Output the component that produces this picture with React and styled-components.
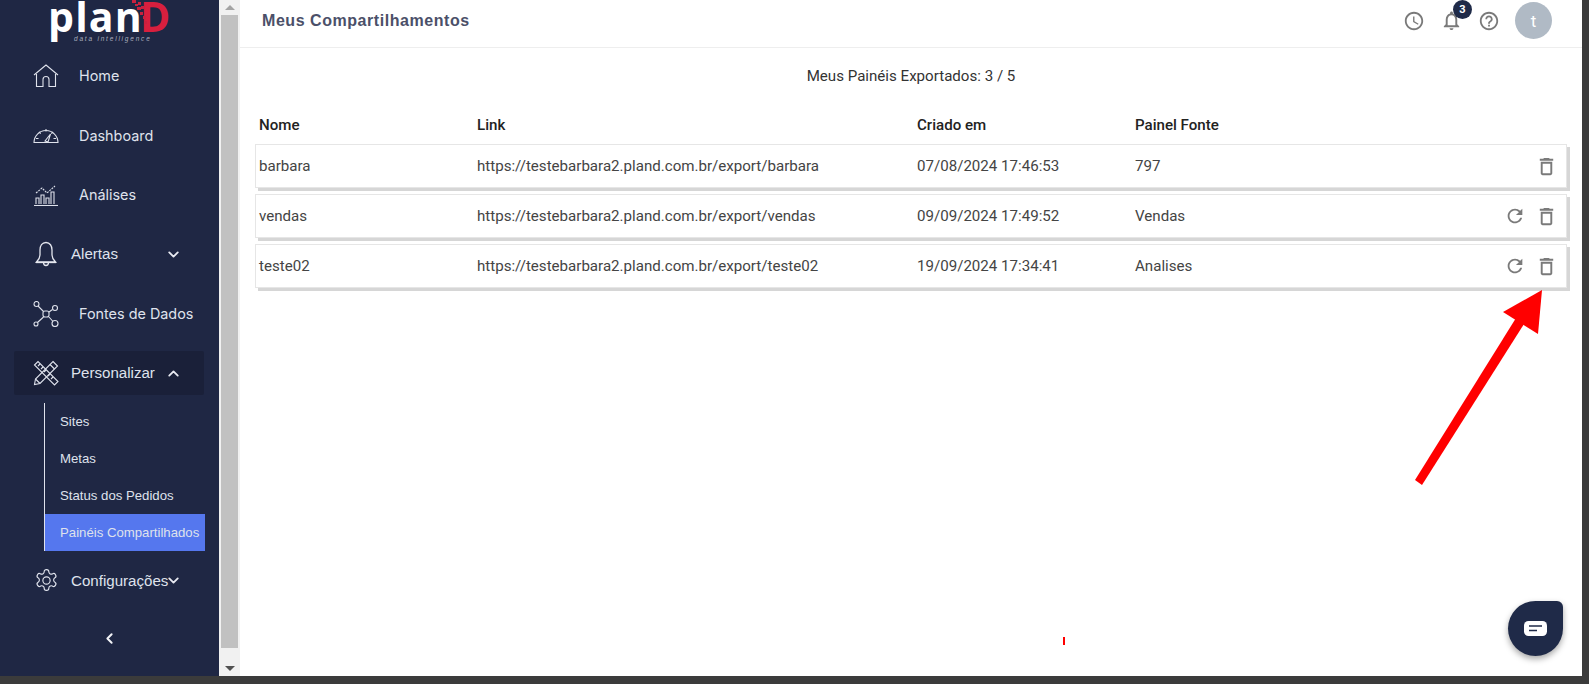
import React from "react";
import styled, { createGlobalStyle } from "styled-components";
import { ChevronDown, ChevronUp, ChevronLeft } from "lucide-react";
import {
  MdAccessTime,
  MdNotificationsNone,
  MdHelpOutline,
  MdRefresh,
  MdOutlineDelete,
} from "react-icons/md";

const rows = [
  {
    name: "barbara",
    link: "https://testebarbara2.pland.com.br/export/barbara",
    date: "07/08/2024 17:46:53",
    source: "797",
    canRefresh: false,
  },
  {
    name: "vendas",
    link: "https://testebarbara2.pland.com.br/export/vendas",
    date: "09/09/2024 17:49:52",
    source: "Vendas",
    canRefresh: true,
  },
  {
    name: "teste02",
    link: "https://testebarbara2.pland.com.br/export/teste02",
    date: "19/09/2024 17:34:41",
    source: "Analises",
    canRefresh: true,
  },
];

const HomeIcon = () => (
  <svg width="26" height="24" viewBox="0 0 26 24" fill="none" stroke="#dfe2ec" strokeWidth="1.100">
    <path d="M1 11 13 1l12 10" />
    <path d="M3.500 10v12.500h6.500v-7a3 3 0 0 1 6 0v7h6.500V10" />
  </svg>
);

const GaugeIcon = () => (
  <svg width="26" height="18" viewBox="0 0 26 18" fill="none" stroke="#dfe2ec" strokeWidth="1.100">
    <path d="M1 16.500a12 12 0 0 1 24 0z" />
    <path d="M13 3v2.500M6 6l1.700 1.700M20 6l-1.700 1.700M3 12.500h2.500M20.500 12.500H23" />
    <path d="M12 15l5.500-7-2.500 8z" />
  </svg>
);

const ChartIcon = () => (
  <svg width="26" height="22" viewBox="0 0 26 22" fill="none" stroke="#dfe2ec" strokeWidth="1.100">
    <path d="M1 21.500h24" />
    <path d="M3 20v-6h3v6M8 20V11h3v9M13 20v-6h3v6M18 20V8h3v12" />
    <path d="M3 9l6-5 5 5 8-7" strokeDasharray="2 1" />
  </svg>
);

const BellIcon = () => (
  <svg width="22" height="27" viewBox="0 0 22 27" fill="none" stroke="#e4e6ee" strokeWidth="1.300">
    <path d="M11 1.500c-4 0-6 3.500-6 7.500v5c0 3-1.500 5-3.500 7h19c-2-2-3.500-4-3.500-7V9c0-4-2-7.500-6-7.500z" />
    <path d="M8.500 21.500c0 4 5 4 5 0" />
    <path d="M1 21.500h20" />
  </svg>
);

const NetworkIcon = () => (
  <svg width="26" height="26" viewBox="0 0 26 26" fill="none" stroke="#dfe2ec" strokeWidth="1.100">
    <rect x="10" y="10" width="6" height="6" rx="2" />
    <circle cx="3.500" cy="3" r="2.500" />
    <circle cx="22" cy="7" r="2.500" />
    <circle cx="3" cy="23" r="2" />
    <circle cx="22" cy="22.500" r="3" />
    <path d="M5 5l5.500 5.500M19.500 8.500 16 11M4.500 21.500l6-5.500M16 16l4 4.500" />
  </svg>
);

const ToolsIcon = () => (
  <svg width="26" height="26" viewBox="0 0 26 26" fill="none" stroke="#dfe2ec" strokeWidth="1.100">
    <path d="M1.500 5 5 1.500l20 20-3.500 3.500z" />
    <path d="M5 6l2-2M8 9l2-2M11 12l2-2M15 16l2-2M18 19l2-2" />
    <path d="M20 1.500l4.500 4.500L7 23.500l-5.500 1 1-5.500z" />
    <path d="M17 4.500l4.500 4.500M2.500 19l4.500 4.500" />
  </svg>
);

const GearIcon = () => (
  <svg width="25" height="25" viewBox="0 0 24 24" fill="none" stroke="#dfe2ec" strokeWidth="1.100">
    <circle cx="12" cy="12" r="3.500" />
    <path d="M12.220 1.500h-.44a2 2 0 0 0-2 2v.180a2 2 0 0 1-1 1.730l-.430.250a2 2 0 0 1-2 0l-.150-.080a2 2 0 0 0-2.730.730l-.220.380a2 2 0 0 0 .730 2.730l.150.100a2 2 0 0 1 1 1.720v.510a2 2 0 0 1-1 1.740l-.150.090a2 2 0 0 0-.730 2.730l.220.380a2 2 0 0 0 2.730.730l.150-.080a2 2 0 0 1 2 0l.430.250a2 2 0 0 1 1 1.730v.180a2 2 0 0 0 2 2h.44a2 2 0 0 0 2-2v-.180a2 2 0 0 1 1-1.730l.430-.250a2 2 0 0 1 2 0l.150.080a2 2 0 0 0 2.730-.730l.220-.390a2 2 0 0 0-.730-2.730l-.150-.080a2 2 0 0 1-1-1.740v-.500a2 2 0 0 1 1-1.740l.150-.090a2 2 0 0 0 .730-2.730l-.220-.380a2 2 0 0 0-2.730-.730l-.150.080a2 2 0 0 1-2 0l-.430-.250a2 2 0 0 1-1-1.730V3.500a2 2 0 0 0-2-2z" />
  </svg>
);

const App = () => {
  return (
    <Frame>
      <GlobalStyle />
      <Window>
        <Sidebar>
          <LogoBox>
            <LogoText>
              plan<LogoD>D</LogoD>
            </LogoText>
            <LogoBits width="24" height="26" viewBox="0 0 24 26" fill="#c9213f">
              <rect x="2" y="0" width="4" height="3" />
              <rect x="5" y="4" width="3" height="2" />
              <rect x="8" y="2" width="3" height="3" />
              <rect x="7" y="7" width="4" height="3" />
              <rect x="11" y="6" width="3" height="3" />
              <rect x="10" y="12" width="3" height="3" />
              <rect x="13" y="16" width="3" height="3" />
              <rect x="15" y="21" width="2" height="3" />
            </LogoBits>
            <LogoTag>data intelligence</LogoTag>
          </LogoBox>

          <NavItem>
            <NavIcon><HomeIcon /></NavIcon>
            <NavLabel>Home</NavLabel>
          </NavItem>
          <NavItem>
            <NavIcon><GaugeIcon /></NavIcon>
            <NavLabel>Dashboard</NavLabel>
          </NavItem>
          <NavItem>
            <NavIcon><ChartIcon /></NavIcon>
            <NavLabel>Análises</NavLabel>
          </NavItem>
          <NavItem>
            <NavIcon><BellIcon /></NavIcon>
            <GroupLabel>Alertas</GroupLabel>
            <Caret $gap={47}><ChevronDown size={17} strokeWidth={2.6} /></Caret>
          </NavItem>
          <NavItem>
            <NavIcon><NetworkIcon /></NavIcon>
            <NavLabel>Fontes de Dados</NavLabel>
          </NavItem>
          <NavItem>
            <OpenGroup>
              <NavIcon $open><ToolsIcon /></NavIcon>
              <GroupLabel>Personalizar</GroupLabel>
              <Caret $gap={10}><ChevronUp size={17} strokeWidth={2.6} /></Caret>
            </OpenGroup>
          </NavItem>
          <SubMenu>
            <SubItem>Sites</SubItem>
            <SubItem>Metas</SubItem>
            <SubItem>Status dos Pedidos</SubItem>
            <SubItem $active>Painéis Compartilhados</SubItem>
          </SubMenu>
          <NavItem>
            <NavIcon><GearIcon /></NavIcon>
            <GroupLabel>Configurações</GroupLabel>
            <Caret $gap={-3}><ChevronDown size={17} strokeWidth={2.6} /></Caret>
          </NavItem>
          <Collapse>
            <ChevronLeft size={17} strokeWidth={2.8} />
          </Collapse>
        </Sidebar>

        <ScrollBar>
          <ScrollArrow $up />
          <ScrollThumb />
          <ScrollArrow />
        </ScrollBar>

        <Main>
          <TopBar>
            <Title>Meus Compartilhamentos</Title>
            <TopActions>
              <TopIcon $spaced><MdAccessTime size={22} /></TopIcon>
              <TopIcon>
                <MdNotificationsNone size={23} />
                <Badge>3</Badge>
              </TopIcon>
              <TopIcon><MdHelpOutline size={22} /></TopIcon>
              <Avatar>t</Avatar>
            </TopActions>
          </TopBar>

          <Summary>Meus Painéis Exportados: 3 / 5</Summary>

          <TableHead>
            <span>Nome</span>
            <span>Link</span>
            <span>Criado em</span>
            <span>Painel Fonte</span>
          </TableHead>

          <RowList>
            {rows.map((row) => (
              <Row key={row.name}>
                <span>{row.name}</span>
                <span>{row.link}</span>
                <span>{row.date}</span>
                <span>{row.source}</span>
                <RowActions>
                  {row.canRefresh && <MdRefresh size={22} />}
                  <MdOutlineDelete size={23} />
                </RowActions>
              </Row>
            ))}
          </RowList>

          <RedTick />
          <Arrow width="130" height="200" viewBox="0 0 130 200" fill="#ff0000">
            <path d="M128 0 124 44 89 22z" />
            <path d="M102 28 110 34 8 195 1 190z" />
          </Arrow>
          <ChatButton>
            <svg width="23" height="15" viewBox="0 0 23 15">
              <rect width="23" height="15" rx="4.500" fill="#fff" />
              <path d="M5 5h13M5 9.500h8" stroke="#1f2a48" strokeWidth="1.600" />
            </svg>
          </ChatButton>
        </Main>
      </Window>
      <BottomBand />
    </Frame>
  );
};

const GlobalStyle = createGlobalStyle`
  html, body {
    margin: 0;
    height: 100%;
    overflow: hidden;
    background: #3b3b3b;
  }
`;

const Frame = styled.div`
  width: 1589px;
  height: 684px;
  display: flex;
  flex-direction: column;
  background: #3b3b3b;
`;

const Window = styled.div`
  display: flex;
  height: 676px;
  width: 1582px;
  flex-shrink: 0;
`;

const BottomBand = styled.div`
  flex: 1;
  background: #3b3b3b;
`;

const Sidebar = styled.nav`
  width: 219px;
  flex-shrink: 0;
  background: #1f2744;
  display: flex;
  flex-direction: column;
  color: #dfe2ec;
`;

const LogoBox = styled.div`
  position: relative;
  height: 46px;
  flex-shrink: 0;
  overflow: hidden;
`;

const LogoText = styled.div`
  position: absolute;
  left: 48px;
  top: 0;
  font-family: "Open Sans", sans-serif;
  font-size: 41px;
  font-weight: 700;
  line-height: 32px;
  letter-spacing: 1.2px;
  color: #fff;
`;

const LogoD = styled.span`
  font-size: 41px;
  letter-spacing: 0;
  margin-left: -3px;
  color: #d81f3e;
`;

const LogoBits = styled.svg`
  position: absolute;
  left: 130px;
  top: 0;
`;

const LogoTag = styled.div`
  position: absolute;
  left: 74px;
  top: 35px;
  font-family: "Liberation Sans", sans-serif;
  font-size: 6.5px;
  font-style: italic;
  letter-spacing: 1.8px;
  line-height: 8px;
  color: #a9adbd;
  white-space: nowrap;
`;

const NavItem = styled.div`
  height: 59.5px;
  flex-shrink: 0;
  display: flex;
  align-items: center;
`;

const NavIcon = styled.span`
  width: 26px;
  height: 28px;
  margin-left: ${({ $open }) => ($open ? "19px" : "33px")};
  display: flex;
  align-items: center;
  justify-content: center;
  flex-shrink: 0;
`;

const NavLabel = styled.span`
  margin-left: 20px;
  font-family: Inter, sans-serif;
  font-size: 14.4px;
  color: #dfe2ec;
`;

const GroupLabel = styled.span`
  margin-left: 12px;
  padding-bottom: 1px;
  font-family: "Liberation Sans", sans-serif;
  font-size: 15.1px;
  color: #dfe2ec;
`;

const Caret = styled.span`
  margin-left: ${({ $gap }) => $gap}px;
  display: flex;
  color: #e8eaf2;
`;

const OpenGroup = styled.div`
  margin-left: 14px;
  width: 190px;
  height: 44px;
  border-radius: 2px;
  background: #1a2039;
  display: flex;
  align-items: center;
`;

const SubMenu = styled.div`
  margin-left: 44px;
  width: 160px;
  border-left: 1px solid #dfe2ec;
  display: flex;
  flex-direction: column;
`;

const SubItem = styled.div`
  height: 37px;
  padding-left: 15px;
  display: flex;
  align-items: center;
  font-family: "Liberation Sans", sans-serif;
  font-size: 13.2px;
  white-space: nowrap;
  color: #dfe2ec;
  background: ${({ $active }) => ($active ? "#5577ee" : "transparent")};
`;

const Collapse = styled.div`
  margin-top: 19px;
  display: flex;
  justify-content: center;
  color: #f2f3f7;
  padding-right: 1px;
`;

const ScrollBar = styled.div`
  width: 21px;
  flex-shrink: 0;
  background: #f1f1f1;
  display: flex;
  flex-direction: column;
  align-items: center;
`;

const ScrollArrow = styled.div`
  height: 15px;
  flex-shrink: 0;
  display: flex;
  align-items: center;
  justify-content: center;

  &::before {
    content: "";
    border-left: 5px solid transparent;
    border-right: 5px solid transparent;
    border-bottom: ${({ $up }) => ($up ? "5px solid #a3a3a3" : "none")};
    border-top: ${({ $up }) => ($up ? "none" : "5px solid #505050")};
  }
`;

const ScrollThumb = styled.div`
  flex: 1;
  width: 17px;
  background: #c1c1c1;
  margin-bottom: 13px;
`;

const Main = styled.main`
  position: relative;
  flex: 1;
  min-width: 0;
  background: #fff;
  font-family: Roboto, sans-serif;
`;

const TopBar = styled.header`
  box-sizing: content-box;
  height: 41px;
  border-bottom: 1px solid #eeeeee;
  display: flex;
  align-items: center;
  justify-content: space-between;
  padding: 0 30px 6px 22px;
`;

const Title = styled.h1`
  margin: 0;
  font-family: "Liberation Sans", sans-serif;
  font-size: 16px;
  font-weight: 700;
  letter-spacing: 0.55px;
  color: #4b5069;
`;

const TopActions = styled.div`
  display: flex;
  align-items: center;
  color: #7a7a7a;
`;

const TopIcon = styled.span`
  position: relative;
  width: 37px;
  margin-right: ${({ $spaced }) => ($spaced ? "1px" : "0")};
  display: flex;
  justify-content: center;
`;

const Badge = styled.span`
  position: absolute;
  top: -9px;
  left: 20px;
  width: 19px;
  height: 19px;
  border-radius: 50%;
  background: #1f2a48;
  color: #fff;
  font-size: 11px;
  font-weight: 700;
  display: flex;
  align-items: center;
  justify-content: center;
`;

const Avatar = styled.span`
  width: 37px;
  height: 37px;
  margin-left: 8px;
  border-radius: 50%;
  background: #b0bac5;
  color: #fff;
  font-size: 17px;
  display: flex;
  align-items: center;
  justify-content: center;
`;

const Summary = styled.p`
  margin: 0;
  padding-top: 19px;
  height: 58px;
  box-sizing: border-box;
  text-align: center;
  font-size: 15.1px;
  line-height: 18px;
  color: #333;
`;

const columns = "218px 440px 218px 218px 1fr";

const TableHead = styled.div`
  display: grid;
  grid-template-columns: ${columns};
  padding: 0 15px 0 19px;
  height: 38px;
  align-items: center;
  font-size: 15.1px;
  font-weight: 500;
  color: #222;
`;

const RowList = styled.div`
  display: flex;
  flex-direction: column;
  gap: 6px;
  padding: 0 15px;
`;

const Row = styled.div`
  display: grid;
  grid-template-columns: ${columns};
  align-items: center;
  height: 44px;
  box-sizing: border-box;
  padding-left: 3px;
  border: 1px solid #e6e6e6;
  box-shadow: 3px 3px 0 #d6d6d6;
  font-size: 15.1px;
  color: #444;
`;

const RowActions = styled.div`
  display: flex;
  justify-content: flex-end;
  align-items: center;
  gap: 9px;
  padding-right: 8px;
  color: #7a7a7a;
`;

const RedTick = styled.div`
  position: absolute;
  left: 823px;
  top: 637px;
  width: 2px;
  height: 8px;
  background: #ff0000;
`;

const Arrow = styled.svg`
  position: absolute;
  left: 1174px;
  top: 290px;
`;

const ChatButton = styled.div`
  position: absolute;
  left: 1268px;
  top: 601px;
  width: 55px;
  height: 55px;
  border-radius: 50% 6px 50% 50%;
  background: #1f2a48;
  box-shadow: 0 3px 6px rgba(0, 0, 0, 0.35);
  display: flex;
  align-items: center;
  justify-content: center;
`;

export default App;
